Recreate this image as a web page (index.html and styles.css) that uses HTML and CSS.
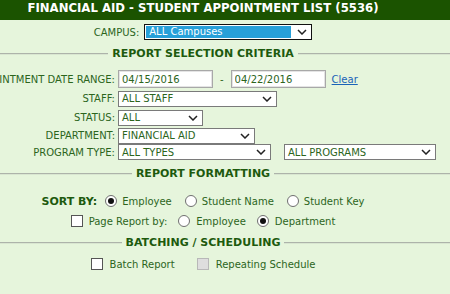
FILE: index.html
```html
<!DOCTYPE html>
<html lang="en">
<head>
  <meta charset="UTF-8" />
  <meta name="viewport" content="width=device-width, initial-scale=1" />
  <title>Student Appointment List</title>
  <link rel="stylesheet" href="styles.css">
</head>
<body>
<div class="page">

  <div class="header">FINANCIAL AID - STUDENT APPOINTMENT LIST (5536)</div>

  <div class="campus-row">
    <span>CAMPUS:</span>
    <div class="select campus focused">
      <span class="sel-text">ALL Campuses</span>
      <svg class="chev" width="10" height="6" viewBox="0 0 10 6"><path d="M1 1l4 4 4-4" fill="none" stroke="#222" stroke-width="1.5"/></svg>
    </div>
  </div>

  <div class="section section-criteria"><span>REPORT SELECTION CRITERIA</span></div>

  <div class="field row-date">
    <div class="field-label"><span>APPOINTMENT DATE RANGE:</span></div>
    <input class="date" type="text" value="04/15/2016" />
    <span class="dash">-</span>
    <input class="date date-to" type="text" value="04/22/2016" />
    <a class="clear" href="#">Clear</a>
  </div>

  <div class="field row-staff">
    <div class="field-label"><span>STAFF:</span></div>
    <div class="select w-staff">
      <span>ALL STAFF</span>
      <svg class="chev" width="10" height="6" viewBox="0 0 10 6"><path d="M1 1l4 4 4-4" fill="none" stroke="#222" stroke-width="1.5"/></svg>
    </div>
  </div>

  <div class="field row-status">
    <div class="field-label"><span>STATUS:</span></div>
    <div class="select w-status">
      <span>ALL</span>
      <svg class="chev" width="10" height="6" viewBox="0 0 10 6"><path d="M1 1l4 4 4-4" fill="none" stroke="#222" stroke-width="1.5"/></svg>
    </div>
  </div>

  <div class="field row-dept">
    <div class="field-label"><span>DEPARTMENT:</span></div>
    <div class="select w-dept">
      <span>FINANCIAL AID</span>
      <svg class="chev" width="10" height="6" viewBox="0 0 10 6"><path d="M1 1l4 4 4-4" fill="none" stroke="#222" stroke-width="1.5"/></svg>
    </div>
  </div>

  <div class="field row-program">
    <div class="field-label"><span>PROGRAM TYPE:</span></div>
    <div class="select w-type">
      <span>ALL TYPES</span>
      <svg class="chev" width="10" height="6" viewBox="0 0 10 6"><path d="M1 1l4 4 4-4" fill="none" stroke="#222" stroke-width="1.5"/></svg>
    </div>
    <div class="select w-prog">
      <span>ALL PROGRAMS</span>
      <svg class="chev" width="10" height="6" viewBox="0 0 10 6"><path d="M1 1l4 4 4-4" fill="none" stroke="#222" stroke-width="1.5"/></svg>
    </div>
  </div>

  <div class="section section-format"><span>REPORT FORMATTING</span></div>

  <div class="option-row sort-row">
    <span class="sort-label">SORT BY:</span>
    <label class="opt"><span class="radio on"></span>Employee</label>
    <label class="opt"><span class="radio"></span>Student Name</label>
    <label class="opt"><span class="radio"></span>Student Key</label>
  </div>

  <div class="option-row page-row">
    <label class="opt"><span class="check"></span>Page Report by:</label>
    <label class="opt"><span class="radio"></span>Employee</label>
    <label class="opt"><span class="radio on"></span>Department</label>
  </div>

  <div class="section section-batch"><span>BATCHING / SCHEDULING</span></div>

  <div class="option-row batch-row">
    <label class="opt"><span class="check"></span>Batch Report</label>
    <label class="opt"><span class="check disabled"></span>Repeating Schedule</label>
  </div>

</div>
</body>
</html>
```

FILE: styles.css
```css
body {
  margin: 0;
  background: #e6f5dc;
  font-family: "DejaVu Sans", Verdana, sans-serif;
  font-size: 10px;
  color: #2c651c;
  overflow: hidden;
}
.page {
  margin-left: -44px;
}
.header {
  height: 20px;
  line-height: 17px;
  background: #1b5300;
  color: #fff;
  font-weight: bold;
  font-size: 11.7px;
  text-align: center;
}
.campus-row {
  display: flex;
  justify-content: center;
  align-items: center;
  gap: 5px;
  height: 16px;
  margin-top: 4px;
}
.select {
  display: flex;
  align-items: center;
  justify-content: space-between;
  box-sizing: border-box;
  height: 16px;
  padding: 0 4px 0 3px;
  background: #fff;
  border: 1px solid #7a7a7a;
  color: #2c651c;
  white-space: nowrap;
}
.select.campus {
  width: 168px;
  padding: 1px 4px 1px 1px;
  border-color: #111;
  align-items: stretch;
}
.campus .sel-text {
  flex: 1;
  margin-right: 6px;
  background: #27a0d9;
  color: #fff;
  padding-left: 3px;
  line-height: 12px;
}
.campus .chev {
  align-self: center;
}
.chev {
  flex: none;
}
.w-staff { width: 159px; }
.w-status { width: 85px; }
.w-dept { width: 137px; }
.w-type { width: 153px; }
.w-prog { width: 152px; margin-left: 13px; }

.section {
  display: flex;
  align-items: center;
  gap: 4px;
  height: 14px;
  line-height: 14px;
  font-size: 11px;
  font-weight: bold;
  color: #1d5a0e;
}
.section::before,
.section::after {
  content: "";
  flex: 1;
  border-top: 1px solid #adb3aa;
  border-bottom: 1px solid #d9e6d1;
}
.section-criteria { margin-top: 7px; }
.section-format { margin-top: 7px; }
.section-batch { margin-top: 7px; }

.field {
  display: flex;
  align-items: center;
  height: 19px;
}
.field-label {
  flex: none;
  width: 162px;
  box-sizing: border-box;
  padding-right: 3px;
  display: flex;
  justify-content: flex-end;
  white-space: nowrap;
}
.row-date {
  height: 20px;
  margin-top: 8px;
}
.row-dept { height: 17px; }
.row-program { height: 16px; }

input.date {
  box-sizing: border-box;
  width: 95px;
  height: 18px;
  margin: 0;
  padding: 0 3px;
  border: 1px solid #a8a8a8;
  box-shadow: inset 0 0 0 1px #e4e4e4;
  font-family: "DejaVu Sans", Verdana, sans-serif;
  font-size: 10px;
  color: #2c651c;
  background: #fff;
}
.date-to { width: 94px; }
.dash {
  margin: 0 7px;
}
.clear {
  margin-left: 6px;
  color: #1a63b8;
  text-decoration: underline;
}

.option-row {
  display: flex;
  justify-content: center;
  align-items: center;
  height: 16px;
}
.opt {
  display: flex;
  align-items: center;
  gap: 5px;
  white-space: nowrap;
}
.sort-row {
  margin-top: 12px;
  gap: 13px;
}
.sort-label {
  font-size: 11px;
  font-weight: bold;
  color: #1d5a0e;
  margin-right: -5px;
}
.page-row {
  margin-top: 4px;
  gap: 11px;
}
.page-row .opt { gap: 6px; }
.batch-row {
  margin-top: 6px;
  gap: 22px;
}
.batch-row .opt { gap: 7px; }

.radio {
  position: relative;
  flex: none;
  box-sizing: border-box;
  width: 12px;
  height: 12px;
  border: 1px solid #6f6f6f;
  border-radius: 50%;
  background: #fff;
}
.radio.on::after {
  content: "";
  position: absolute;
  left: 2px;
  top: 2px;
  width: 6px;
  height: 6px;
  border-radius: 50%;
  background: #111;
}
.check {
  flex: none;
  box-sizing: border-box;
  width: 12px;
  height: 12px;
  border: 1px solid #555;
  background: #fff;
}
.check.disabled {
  border-color: #b8b8b8;
  background: #dedede;
}
```
